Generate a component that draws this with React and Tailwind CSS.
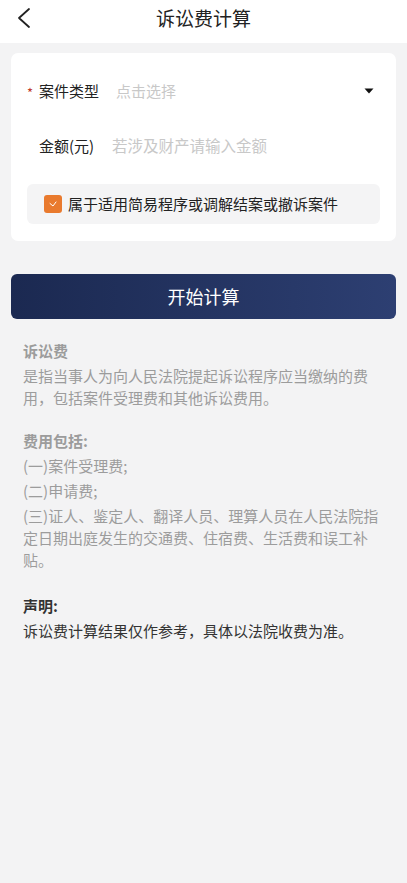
import React, { useState } from "react";

const FONT = { fontFamily: '"Noto Sans CJK SC", "Noto Sans", sans-serif' };

export default function App() {
  const [checked, setChecked] = useState(true);
  const [amount, setAmount] = useState("");

  return (
    <div className="w-[407px] min-h-[883px] bg-[#f3f3f4] flex flex-col" style={FONT}>
      {/* Header */}
      <div className="h-[43px] bg-white flex items-center relative shrink-0">
        <button className="absolute left-[16px] top-[7px] p-0">
          <svg width="16" height="22" viewBox="0 0 16 22" fill="none">
            <path d="M13 2 L3 11 L13 20" stroke="#222" strokeWidth="1.8" strokeLinecap="round" strokeLinejoin="round" />
          </svg>
        </button>
        <h1 className="w-full text-center text-[19px] text-[#222] leading-none -mt-[9px]">诉讼费计算</h1>
      </div>

      {/* Form card */}
      <div className="mx-[11px] mt-[10px] bg-white rounded-[7px] px-[16px] pt-[24px] pb-[17px]">
        <div className="flex items-center h-[30px] -mt-[1px]">
          <span className="w-[12px] text-[#c0392b] text-[13px] leading-none pt-[2px]">*</span>
          <span className="text-[15px] text-[#222] w-[77px]">案件类型</span>
          <span className="flex-1 text-[15px] text-[#c8c8c8]">点击选择</span>
          <svg width="10" height="6" viewBox="0 0 10 6" className="mr-[6px]">
            <path d="M0.5 0.5 H9.5 L5 5.5 Z" fill="#111" />
          </svg>
        </div>
        <div className="flex items-center h-[30px] mt-[25px]">
          <span className="w-[12px]" />
          <span className="text-[15px] text-[#222] w-[73px]">金额(元)</span>
          <input
            value={amount}
            onChange={(e) => setAmount(e.target.value)}
            placeholder="若涉及财产请输入金额"
            className="flex-1 text-[15.5px] text-[#222] placeholder-[#c8c8c8] bg-transparent outline-none"
          />
        </div>
        <div
          className="mt-[23px] bg-[#f4f4f5] rounded-[6px] h-[40px] flex items-center px-[17px] gap-[6px] cursor-pointer"
          onClick={() => setChecked(!checked)}
        >
          <div className={`w-[18px] h-[18px] rounded-[3px] flex items-center justify-center ${checked ? "bg-[#e97a2e]" : "bg-white border border-[#ccc]"}`}>
            {checked && (
              <svg width="8" height="6" viewBox="0 0 8 6" fill="none">
                <path d="M1 2.5 L4 5 L7 1" stroke="#fff" strokeWidth="1" strokeLinecap="round" strokeLinejoin="round" />
              </svg>
            )}
          </div>
          <span className="text-[15px] text-[#222]">属于适用简易程序或调解结案或撤诉案件</span>
        </div>
      </div>

      {/* Button */}
      <button className="mx-[11px] mt-[33px] h-[45px] rounded-[6px] bg-gradient-to-r from-[#1b2951] to-[#2d3f72] text-white text-[18px] flex items-center justify-center">
        开始计算
      </button>

      {/* Explanation */}
      <div className="px-[23px] pt-[21px] text-[15px] text-[#9c9c9c] leading-[22px]">
        <p className="font-semibold">诉讼费</p>
        <p className="mt-[3px]">是指当事人为向人民法院提起诉讼程序应当缴纳的费用，包括案件受理费和其他诉讼费用。</p>

        <p className="mt-[21px] font-semibold">费用包括:</p>
        <p className="mt-[3px]">(一)案件受理费;</p>
        <p className="mt-[3px]">(二)申请费;</p>
        <p className="mt-[3px]">(三)证人、鉴定人、翻译人员、理算人员在人民法院指定日期出庭发生的交通费、住宿费、生活费和误工补贴。</p>

        <p className="mt-[24px] font-semibold text-[#333]">声明:</p>
        <p className="mt-[3px] text-[#333]">诉讼费计算结果仅作参考，具体以法院收费为准。</p>
      </div>
    </div>
  );
}
